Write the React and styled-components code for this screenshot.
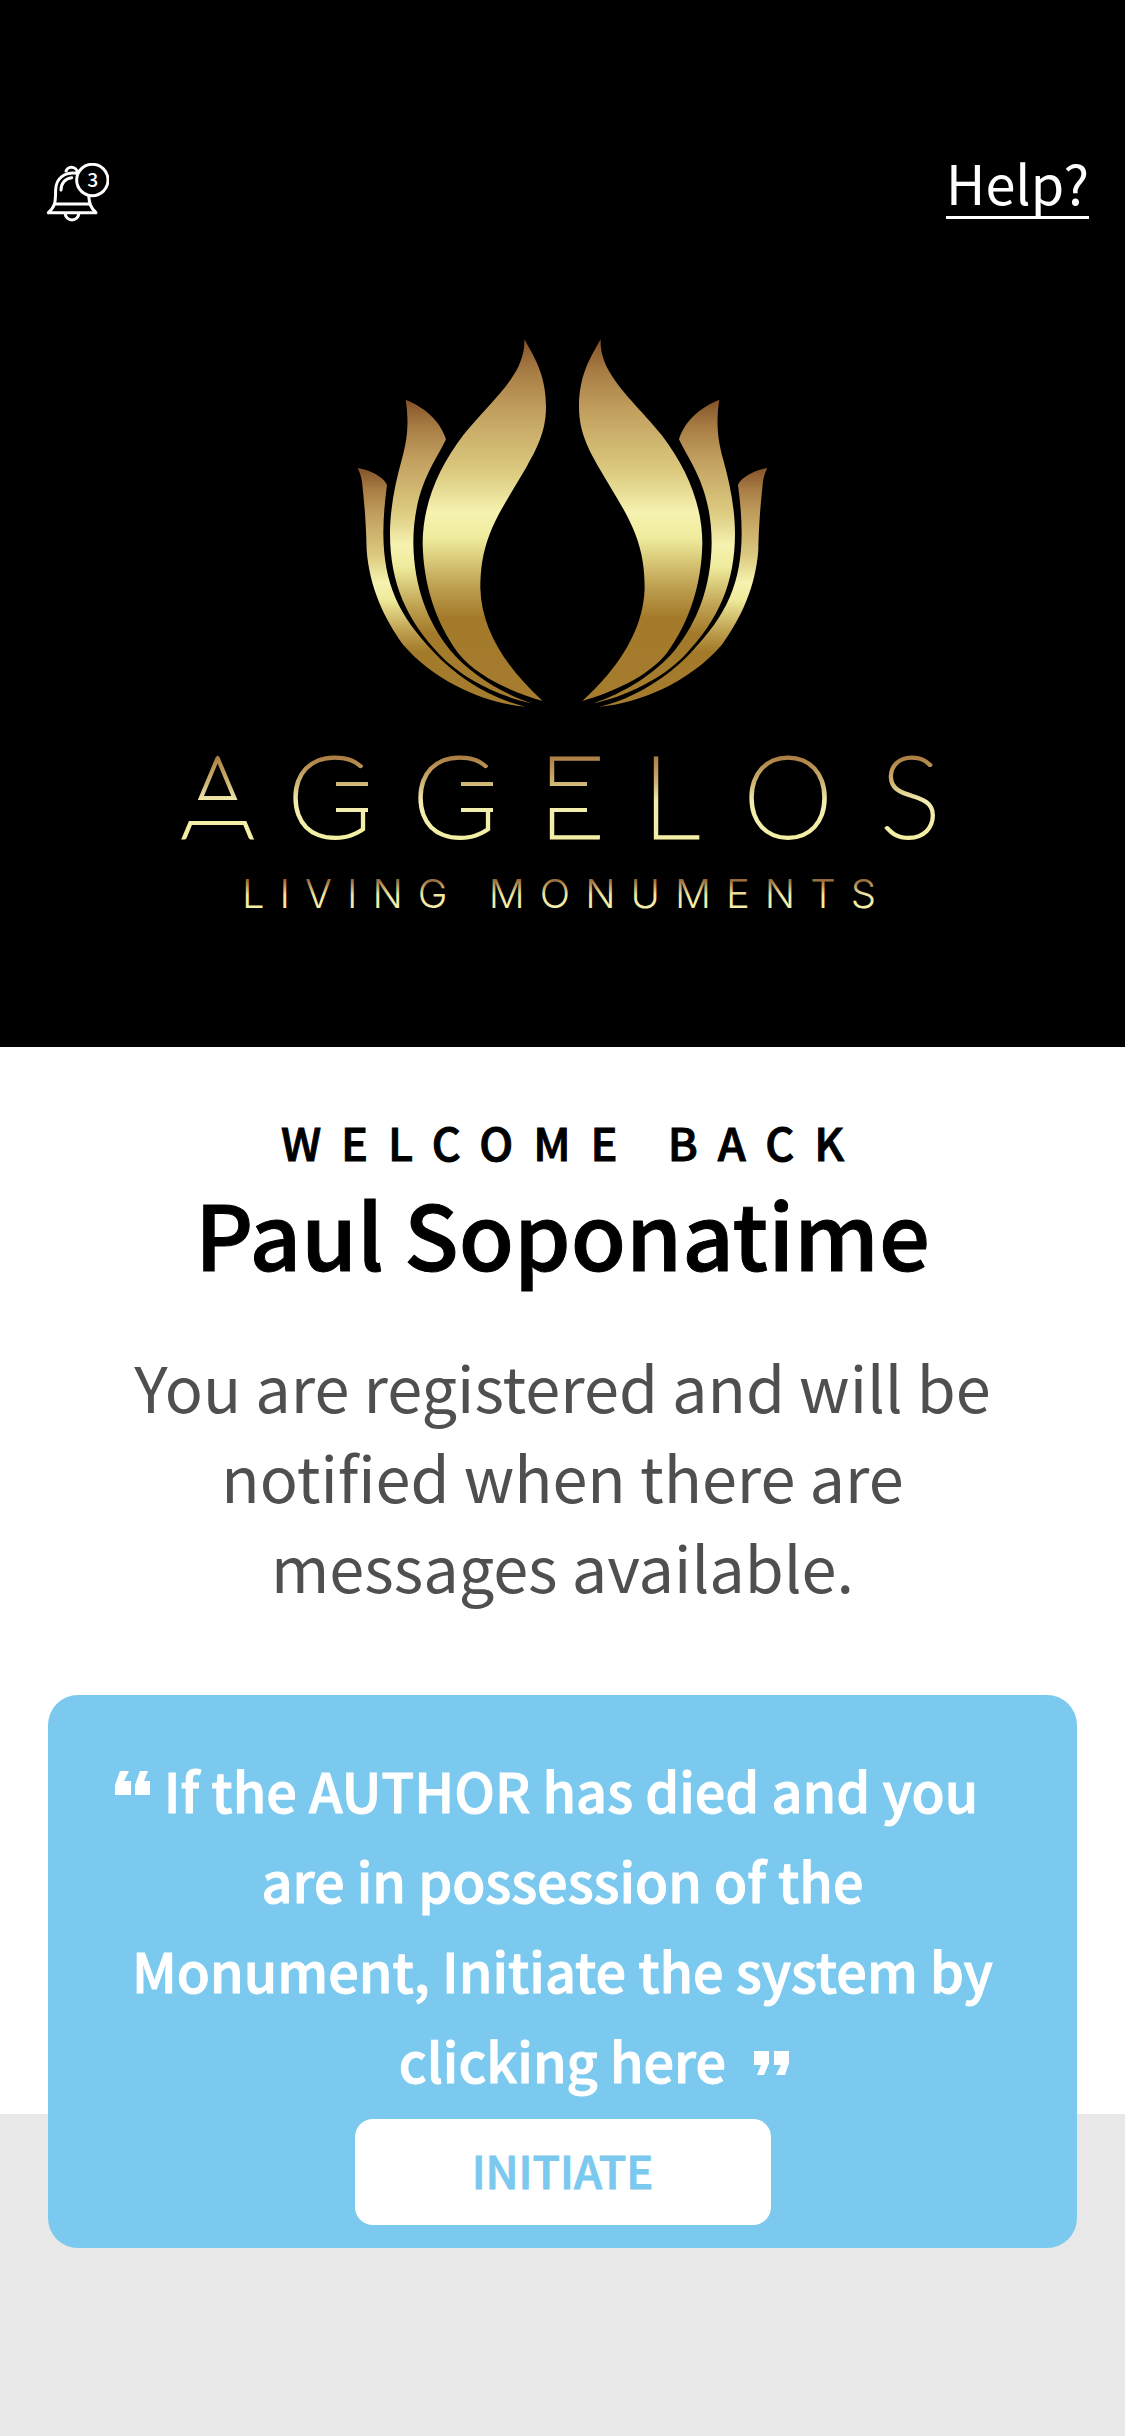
import React from "react";
import styled, { createGlobalStyle } from "styled-components";

const GlobalStyle = createGlobalStyle`
  *, *::before, *::after { box-sizing: border-box; }
  html, body { margin: 0; min-height: 100%; background: #e8e8e8; }
  body, button {
    font-family: "Noto Sans CJK SC", "Noto Sans", sans-serif;
  }
`;

const Page = styled.div`
  min-height: 100vh;
  background: #e8e8e8;
`;

const Header = styled.header`
  display: flex;
  flex-direction: column;
  padding: 148px 36px 117px 46px;
  background: #000;
`;

const TopBar = styled.div`
  display: flex;
  align-items: flex-start;
  justify-content: space-between;
`;

const BellButton = styled.button`
  display: flex;
  padding: 15px 0 0;
  border: 0;
  background: none;
  color: #fff;
  cursor: pointer;
`;

const HelpLink = styled.a`
  border-bottom: 3px solid #fff;
  color: #fff;
  font-size: 54px;
  line-height: 68px;
  text-decoration: none;
`;

const Brand = styled.svg`
  align-self: center;
  width: 780px;
  max-width: 100%;
  height: auto;
  margin: 109px 0 0 -11px;
`;

const Content = styled.main`
  display: flex;
  flex-direction: column;
  padding: 67px 48px 0;
  background: #fff;
  text-align: center;
`;

const Greeting = styled.h1`
  display: flex;
  flex-direction: column;
  margin: 0;
  color: #000;
  font-weight: 500;
  -webkit-text-stroke: 1px currentColor;
`;

const Welcome = styled.span`
  padding-left: 20px;
  font-size: 45px;
  line-height: 56px;
  letter-spacing: 20px;
`;

const Name = styled.span`
  font-size: 90px;
  line-height: 124px;
`;

const Notice = styled.p`
  margin: 0;
  padding: 47px 78px 0;
  color: #4f4f4f;
  font-size: 63px;
  line-height: 90px;
`;

const Card = styled.section`
  display: flex;
  flex-direction: column;
  align-items: center;
  margin: 84px 0 -134px;
  padding: 50px 78px 23px;
  border-radius: 30px;
  background: #7bc9ee;
`;

const Quote = styled.p`
  margin: 0;
  color: #fff;
  font-size: 54px;
  font-weight: 500;
  line-height: 90px;
  -webkit-text-stroke: 1px currentColor;
`;

const QuoteMark = styled.svg`
  width: 36px;
  height: 24px;
  margin: ${(p) => (p.$closing ? "0 -64px 0 28px" : "0 13px 0 -32px")};
  vertical-align: ${(p) => (p.$closing ? "8px" : "18px")};
  fill: currentColor;
`;

const InitiateButton = styled.button`
  width: 416px;
  max-width: 100%;
  margin-top: 14px;
  padding: 18px 20px 22px;
  border: 0;
  border-radius: 18px;
  background: #fff;
  color: #7bc9ee;
  font-size: 45px;
  font-weight: 500;
  line-height: 66px;
  -webkit-text-stroke: 1px currentColor;
  cursor: pointer;
`;

function BellIcon() {
  return (
    <svg width="63" height="60" viewBox="50 70 189 180" fill="none" stroke="currentColor" strokeWidth="9" aria-hidden="true">
      <path d="M110 98C110 78 142 78 144 98" />
      <path d="M144 101C105 96 80 116 79 150C78 184 80 199 57 219H200C184 205 180 192 178 168" strokeLinejoin="round" />
      <path d="M76 193H184" />
      <path d="M95 151C95 132 107 116 127 114" strokeLinecap="round" />
      <path d="M107 220C110 248 146 248 149 220" />
      <circle cx="189" cy="121" r="47" />
      <text x="190" y="143" textAnchor="middle" fill="currentColor" stroke="none" fontWeight="500" fontSize="58">3</text>
    </svg>
  );
}

function Petals() {
  return (
    <>
      <path fill="url(#petal)" d="M553 57C580 108 618 160 618 262C618 340 585 395 560 440C520 510 475 575 450 640C427 700 421 750 421 805C424 930 500 1045 608 1143C520 1118 410 1070 355 1000C285 905 250 790 248 670C248 560 290 450 370 345C430 270 500 210 535 140C548 112 554 90 553 57Z" />
      <path fill="url(#petal)" d="M197 239C250 260 300 300 318 358C290 420 220 500 220 670C222 800 262 905 330 990C390 1062 485 1120 575 1150C480 1130 370 1078 300 1005C200 900 150 790 150 640C150 570 165 490 185 420C205 350 206 300 197 239Z" />
      <path fill="url(#petal)" d="M53 444C90 450 130 470 141 494C135 540 130 590 130 640C131 790 175 885 280 995C350 1070 450 1135 556 1160C440 1150 290 1090 190 975C132 895 88 800 80 690C78 600 72 540 66 485C63 465 58 455 53 444Z" />
    </>
  );
}

function BrandLogo() {
  return (
    <Brand viewBox="172 332 780 598" role="img" aria-label="Aggelos Living Monuments">
      <defs>
        <linearGradient id="petal" x1="0" y1="0" x2="0" y2="1">
          <stop offset="0" stopColor="#835228" />
          <stop offset="0.09" stopColor="#a87d45" />
          <stop offset="0.2" stopColor="#c2a05f" />
          <stop offset="0.37" stopColor="#dccb80" />
          <stop offset="0.48" stopColor="#f6f2b0" />
          <stop offset="0.55" stopColor="#efeb9c" />
          <stop offset="0.68" stopColor="#bfa252" />
          <stop offset="0.77" stopColor="#a37a2a" />
          <stop offset="1" stopColor="#a67d2f" />
        </linearGradient>
        <linearGradient id="wordmark" gradientUnits="userSpaceOnUse" x1="0" y1="754" x2="0" y2="840">
          <stop offset="0" stopColor="#a8783f" />
          <stop offset="0.34" stopColor="#cfb573" />
          <stop offset="0.55" stopColor="#f3edb0" />
          <stop offset="1" stopColor="#f3efa3" />
        </linearGradient>
        <linearGradient id="tagline" gradientUnits="userSpaceOnUse" x1="0" y1="877" x2="0" y2="909">
          <stop offset="0" stopColor="#85532c" />
          <stop offset="0.3" stopColor="#c4a062" />
          <stop offset="0.55" stopColor="#f0e8a4" />
          <stop offset="1" stopColor="#f3efa8" />
        </linearGradient>
      </defs>
      <g transform="translate(340 320) scale(0.33333)">
        <Petals />
        <g transform="translate(1335 0) scale(-1 1)">
          <Petals />
        </g>
      </g>
      <text x="181 287 412 538 642 743 880" y="838" fontFamily="Lato, sans-serif" fontWeight="200" fontSize="115" fill="url(#wordmark)" stroke="url(#wordmark)" strokeWidth="3">AGGELOS</text>
      <g fill="#000">
        <rect x="182" y="800" width="68" height="21" />
        <rect x="330" y="786" width="42" height="22" />
        <rect x="455" y="786" width="42" height="22" />
        <rect x="546" y="786" width="58" height="22" />
      </g>
      <g fill="url(#wordmark)">
        <rect x="200" y="796" width="35" height="4" />
        <rect x="191" y="821" width="53" height="4" />
        <rect x="336" y="782" width="32" height="4" />
        <rect x="336" y="808" width="32" height="4" />
        <rect x="461" y="782" width="32" height="4" />
        <rect x="461" y="808" width="32" height="4" />
        <rect x="552" y="782" width="35" height="4" />
        <rect x="552" y="808" width="35" height="4" />
      </g>
      <text x="242" y="908" fontFamily="Inter, sans-serif" fontWeight="300" fontSize="40" letterSpacing="15" fill="url(#tagline)">LIVING MONUMENTS</text>
    </Brand>
  );
}

export default function App() {
  return (
    <Page>
      <GlobalStyle />
      <Header>
        <TopBar>
          <BellButton type="button" aria-label="3 notifications">
            <BellIcon />
          </BellButton>
          <HelpLink href="#help">Help?</HelpLink>
        </TopBar>
        <BrandLogo />
      </Header>
      <Content>
        <Greeting>
          <Welcome>WELCOME BACK</Welcome>
          <Name>Paul Soponatime</Name>
        </Greeting>
        <Notice>You are registered and will be notified when there are messages available.</Notice>
        <Card>
          <Quote>
            <QuoteMark viewBox="0 0 36 24" aria-hidden="true">
              <path d="M5 0H14L9 10H16V24H0V14ZM25 0H33L29 10H35V24H20V14Z" />
            </QuoteMark>
            If the AUTHOR has died and you are in possession of the Monument, Initiate the system by clicking here
            <QuoteMark $closing viewBox="0 0 36 24" aria-hidden="true">
              <path d="M0 0H15V12L10 24H3L7 14H0ZM20 0H35V12L31 24H22L27 14H20Z" />
            </QuoteMark>
          </Quote>
          <InitiateButton type="button">INITIATE</InitiateButton>
        </Card>
      </Content>
    </Page>
  );
}
